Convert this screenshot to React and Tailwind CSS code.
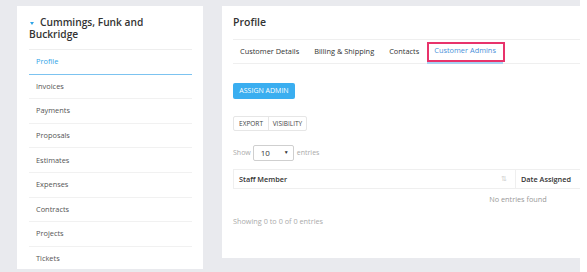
import React from 'react';

const menu = ['Profile', 'Invoices', 'Payments', 'Proposals', 'Estimates', 'Expenses', 'Contracts', 'Projects', 'Tickets'];
const tabs = ['Customer Details', 'Billing & Shipping', 'Contacts', 'Customer Admins'];

const App = () => {
  return (
    <div className="w-[587px] h-[272px] bg-white overflow-hidden" style={{ fontFamily: '"Open Sans", sans-serif' }}>
      <div className="w-[580px] h-[272px] bg-[#e9eaee] flex gap-[19px] pl-[17px] pt-[6px]">
        {/* sidebar */}
        <div className="w-[186px] h-[263px] bg-white pl-[12px] pr-[11px] pt-[11px] overflow-hidden">
          <h3 className="text-[10.2px] leading-[11.5px] font-semibold text-[#333] pb-[9px] border-b border-[#eeeeee]">
            <svg width="4" height="3" viewBox="0 0 4 3" className="inline-block align-middle ml-[1px] mr-[6px]">
              <path d="M0 0h4L2 3z" fill="#2fa4e7" />
            </svg>
            Cummings, Funk and Buckridge
          </h3>
          <ul>
            {menu.map((item, i) => (
              <li
                key={item}
                className={
                  'h-[24.6px] flex items-center pl-[7px] text-[7.4px] ' +
                  (i === 0 ? 'text-[#2fa4e7] border-b border-[#7cc3f0]' : 'text-[#555] border-b border-[#f1f1f1]')
                }
              >
                {item}
              </li>
            ))}
          </ul>
        </div>

        {/* profile */}
        <div className="w-[358px] h-[252px] bg-white pl-[11px] pt-[9px] overflow-hidden">
          <h2 className="text-[10.5px] leading-[14px] font-semibold text-[#333] mb-[10px]">Profile</h2>
          <div className="flex h-[25px] border-t border-b border-[#efefef] text-[7.4px] text-[#333]">
            {tabs.map((t, i) =>
              i === 3 ? (
                <div key={t} className="relative flex items-center px-[7px] text-[#4a90d9] border-b-2 border-[#a8d2f2] -mb-px">
                  <div className="absolute left-0 right-[-2px] top-[2px] bottom-0 border-2 border-[#e8336b]" />
                  {t}
                </div>
              ) : (
                <div key={t} className="flex items-center px-[7px] mr-[1px]">{t}</div>
              )
            )}
          </div>

          <button className="mt-[19px] h-[16px] w-[62px] rounded-[2px] bg-[#3aaef0] text-white text-[7px] flex items-center justify-center">
            ASSIGN ADMIN
          </button>

          <div className="mt-[17px] flex h-[15px] w-[74px] border border-[#e6e6e6] rounded-[2px] text-[6.5px] text-[#444]">
            <span className="w-[35px] flex items-center justify-center border-r border-[#e6e6e6]">EXPORT</span>
            <span className="flex-1 flex items-center justify-center">VISIBILITY</span>
          </div>

          <div className="mt-[14px] flex items-center text-[7px] text-[#aaa]">
            <span>Show</span>
            <div className="ml-[2px] w-[41px] h-[16px] border border-[#cfcfcf] rounded-[2px] flex items-center justify-between pl-[7px] pr-[4px] text-[#333] text-[8px]">
              <span>10</span>
              <span className="text-[5px]">▼</span>
            </div>
            <span className="ml-[3px]">entries</span>
          </div>

          <div className="mt-[8px] w-[570px]">
            <div className="flex h-[20px] border border-[#efefef] text-[7.3px] font-semibold text-[#333]">
              <div className="w-[282px] flex items-center justify-between pl-[5px] pr-[8px] border-r border-[#efefef]">
                <span>Staff Member</span>
                <span className="text-[7px] font-normal text-[#ccc]">⇅</span>
              </div>
              <div className="flex items-center pl-[5px]">Date Assigned</div>
            </div>
            <div className="h-[20px] flex items-center justify-center text-[7.3px] text-[#999]">No entries found</div>
          </div>

          <p className="mt-[7px] text-[7.3px] text-[#aaa]">Showing 0 to 0 of 0 entries</p>
        </div>
      </div>
    </div>
  );
};

export default App;
